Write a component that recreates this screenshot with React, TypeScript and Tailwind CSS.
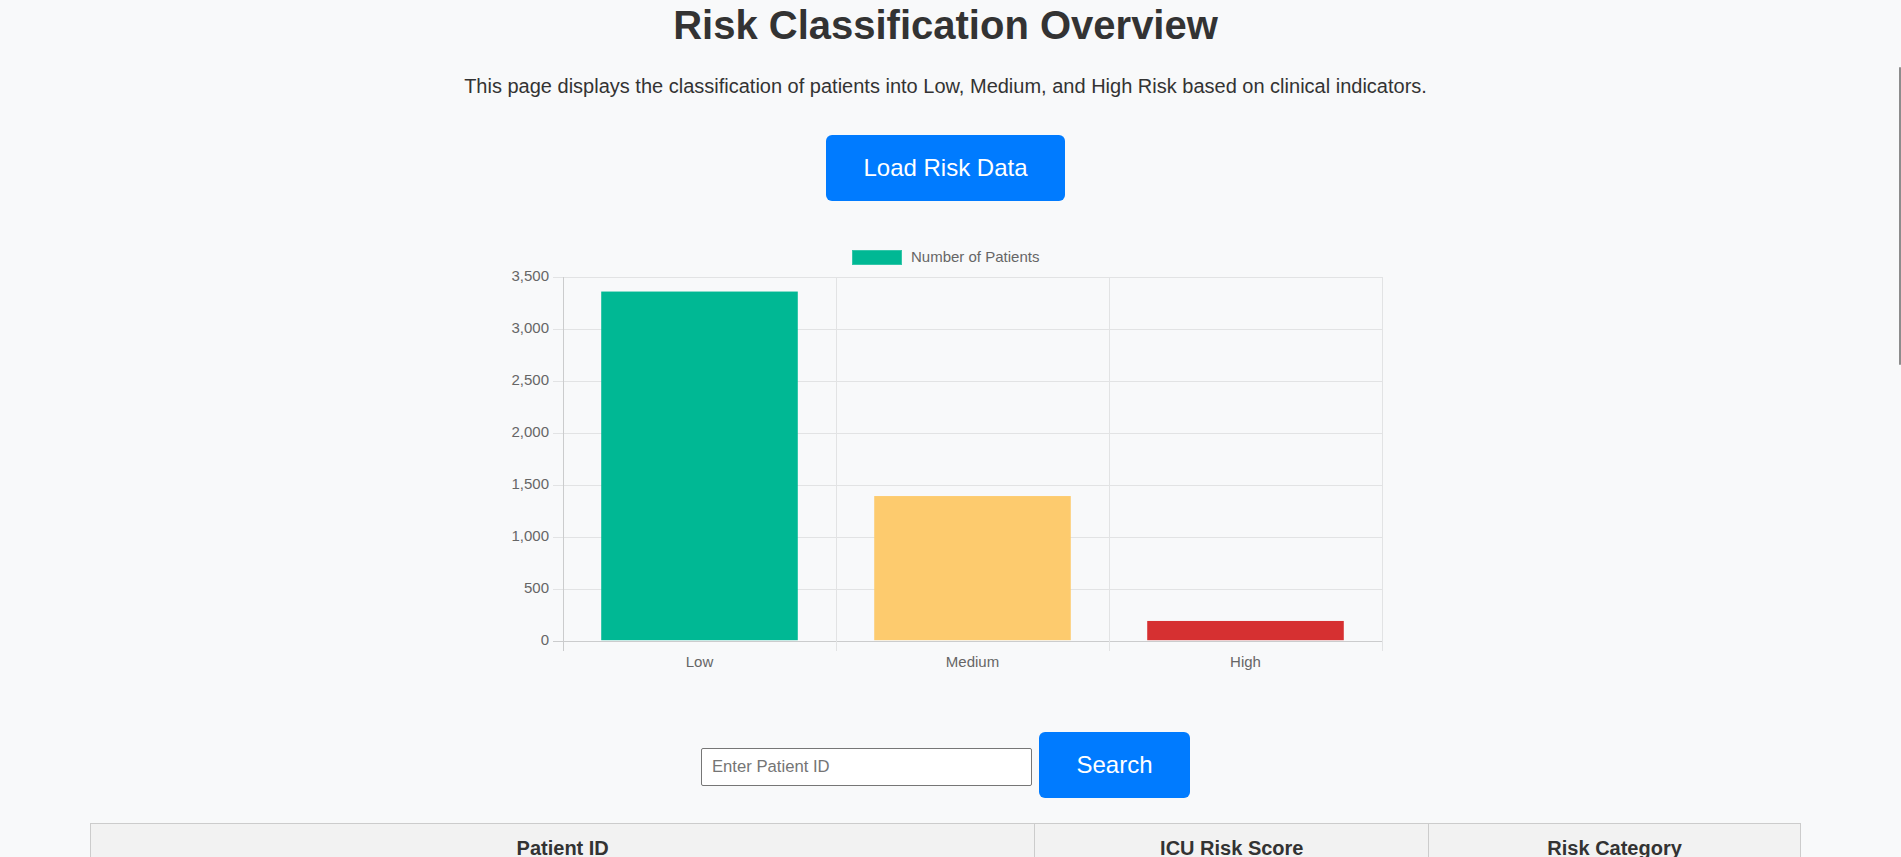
import React from 'react';

const riskData = [
  { label: 'Low', value: 3360, color: '#00b894' },
  { label: 'Medium', value: 1392, color: '#fdcb6e' },
  { label: 'High', value: 190, color: '#d63031' },
];

// chart geometry (svg coords)
const PLOT_LEFT = 63;
const PLOT_RIGHT = 882;
const PLOT_TOP = 37;
const PLOT_BOTTOM = 400.7;
const MAX = 3500;
const STEP = 500;

const yFor = (v: number) => PLOT_BOTTOM - (v / MAX) * (PLOT_BOTTOM - PLOT_TOP);

const RiskChart = () => {
  const ticks = Array.from({ length: MAX / STEP + 1 }, (_, i) => i * STEP);
  const catWidth = (PLOT_RIGHT - PLOT_LEFT) / riskData.length;
  const barWidth = catWidth * 0.72;

  return (
    <svg width="900" height="440" viewBox="0 0 900 440" className="block">
      {/* legend */}
      <rect x="352.5" y="10.5" width="49" height="14" fill="#00b894" stroke="#33c6a9" strokeWidth="1" />
      <text x="411" y="18" fontSize="15" fill="#666" dominantBaseline="middle" fontFamily="'Liberation Sans', Arial, sans-serif">
        Number of Patients
      </text>

      {/* horizontal grid + y labels */}
      {ticks.map((t) => {
        const y = Math.round(yFor(t)) + 0.5;
        return (
          <g key={t}>
            <line x1="53" x2={PLOT_RIGHT} y1={y} y2={y} stroke={t === 0 ? '#cbcccd' : '#e2e3e4'} strokeWidth="1" />
            <text x="49" y={y} fontSize="15" fill="#666" textAnchor="end" dominantBaseline="middle" fontFamily="'Liberation Sans', Arial, sans-serif">
              {t.toLocaleString('en-US')}
            </text>
          </g>
        );
      })}

      {/* vertical grid */}
      {[0, 1, 2, 3].map((i) => {
        const x = Math.round(PLOT_LEFT + i * catWidth) + 0.5;
        return (
          <line key={i} x1={x} x2={x} y1={PLOT_TOP} y2="411" stroke={i === 0 ? '#cbcccd' : '#e2e3e4'} strokeWidth="1" />
        );
      })}

      {/* bars */}
      {riskData.map((d, i) => {
        const cx = PLOT_LEFT + i * catWidth + catWidth / 2;
        const top = yFor(d.value);
        return (
          <g key={d.label}>
            <rect x={cx - barWidth / 2} y={top} width={barWidth} height={PLOT_BOTTOM - top - 0.5} fill={d.color} />
            <text x={cx} y="423" fontSize="15" fill="#666" textAnchor="middle" dominantBaseline="middle" fontFamily="'Liberation Sans', Arial, sans-serif">
              {d.label}
            </text>
          </g>
        );
      })}
    </svg>
  );
};

export default function App() {
  return (
    <div className="relative h-screen overflow-hidden bg-[#f8f9fa] text-[#333] font-['Liberation_Sans',Arial,sans-serif]">
      <div className="w-[1891px] flex flex-col items-center">
        <h1 className="mt-[2px] text-[40px] leading-[46px] font-bold">Risk Classification Overview</h1>
        <p className="mt-[27px] text-[20px] leading-[23px]">
          This page displays the classification of patients into Low, Medium, and High Risk based on clinical indicators.
        </p>

        <button className="mt-[37px] w-[239px] h-[66px] rounded-[6px] bg-[#007bff] text-white text-[24px] leading-none">
          Load Risk Data
        </button>

        <div className="mt-[39px] w-full pl-[500px]">
          <RiskChart />
        </div>

        <div className="mt-[52px] flex items-start gap-[7px]">
          <input
            type="text"
            placeholder="Enter Patient ID"
            className="mt-[16px] w-[331px] h-[38px] px-[10px] bg-white border border-[#767676] rounded-[2px] text-[16.67px] placeholder:text-[#757575] outline-none"
          />
          <button className="w-[151px] h-[66px] rounded-[6px] bg-[#007bff] text-white text-[24px] leading-none">
            Search
          </button>
        </div>

        <table className="mt-[25px] w-[1711px] border-collapse border border-[#ccc]">
          <thead>
            <tr className="bg-[#f2f2f2]">
              <th className="w-[945px] border border-[#ccc] pt-[13px] pb-[13px] text-[20px] leading-[23px] font-bold">Patient ID</th>
              <th className="w-[394px] border border-[#ccc] pt-[13px] pb-[13px] text-[20px] leading-[23px] font-bold">ICU Risk Score</th>
              <th className="w-[372px] border border-[#ccc] pt-[13px] pb-[13px] text-[20px] leading-[23px] font-bold">Risk Category</th>
            </tr>
          </thead>
        </table>
      </div>

      {/* overlay scrollbar thumb */}
      <div className="absolute right-0 top-[67px] w-[2px] h-[298px] bg-[#8c8c8c] rounded-full" />
    </div>
  );
}
